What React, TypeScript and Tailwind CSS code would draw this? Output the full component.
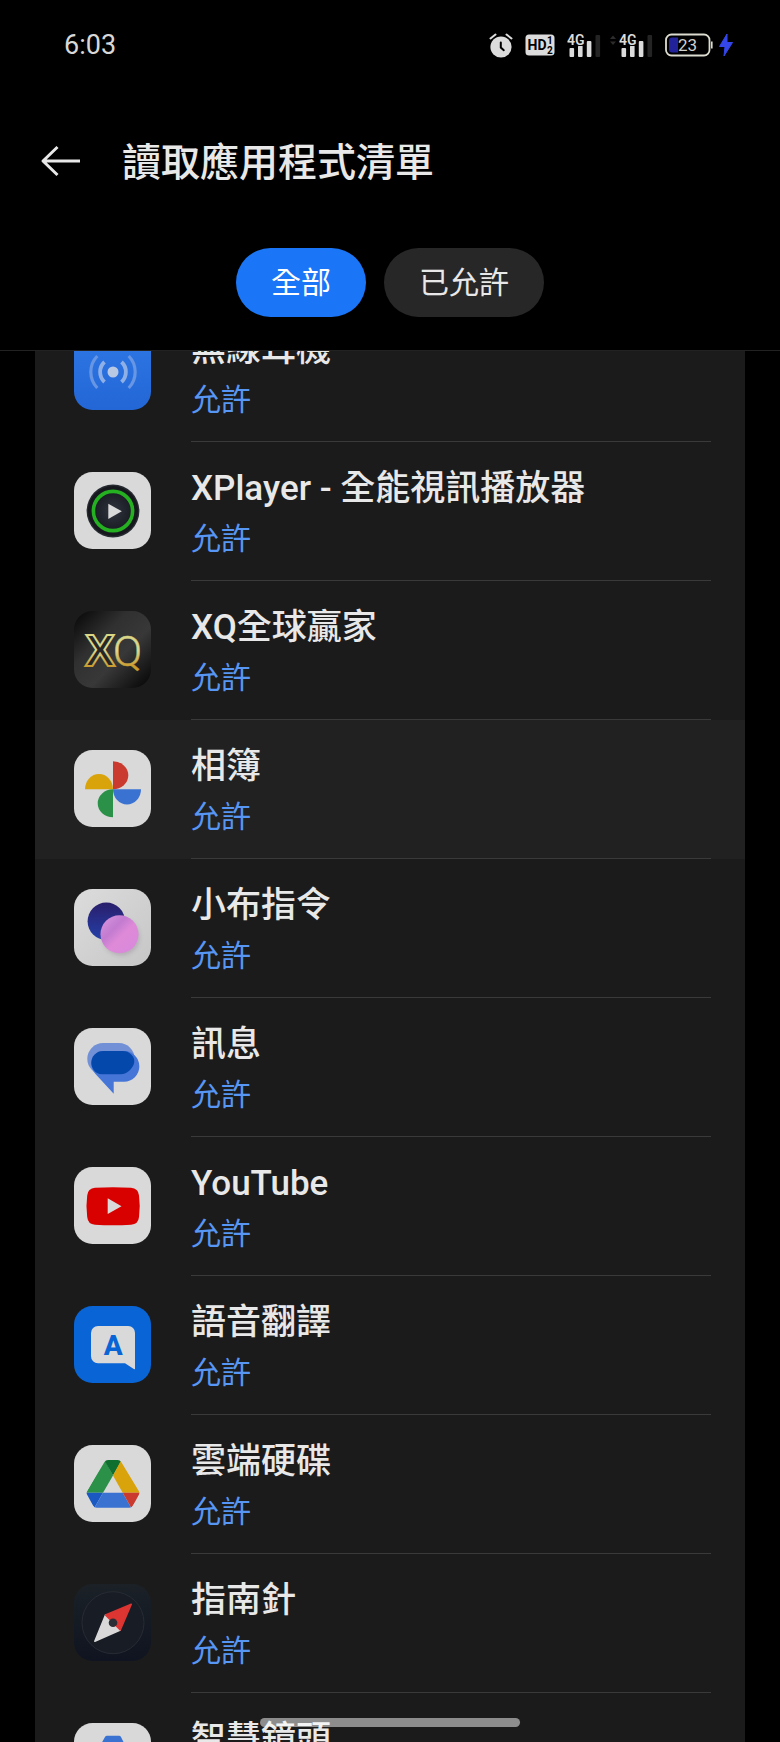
import type { ReactNode } from "react";

function Tile({ children, bg }: { children: ReactNode; bg: string }) {
  return (
    <svg viewBox="0 0 77 77" className="mb-0.5 size-[77px] shrink-0" aria-hidden="true">
      <defs>
        <linearGradient id="blueTile" x1="0" y1="0" x2="0" y2="1">
          <stop offset="0" stopColor="#2f78e6" />
          <stop offset="1" stopColor="#2366d6" />
        </linearGradient>
        <linearGradient id="metalTile" x1="0" y1="0" x2="1" y2="1">
          <stop offset="0.05" stopColor="#0c0c0c" />
          <stop offset="0.35" stopColor="#303030" />
          <stop offset="0.6" stopColor="#383838" />
          <stop offset="0.95" stopColor="#0a0a0a" />
        </linearGradient>
        <linearGradient id="nightTile" x1="0" y1="0" x2="0" y2="1">
          <stop offset="0" stopColor="#1b2127" />
          <stop offset="1" stopColor="#0f1420" />
        </linearGradient>
        <linearGradient id="silverTile" x1="0" y1="0" x2="1" y2="1">
          <stop offset="0" stopColor="#dcdcdc" />
          <stop offset="1" stopColor="#c6c6c6" />
        </linearGradient>
      </defs>
      <rect width="77" height="77" rx="18.5" fill={bg} />
      {children}
    </svg>
  );
}

const WHITE = "#d9d9d9";

const EarbudsIcon = () => (
  <Tile bg="url(#blueTile)">
    <circle cx="39" cy="39" r="5.5" fill="#b9c9e4" />
    <g fill="none">
      <path d="M30.5 29a13.6 13.6 0 0 0 0 20M47.5 29a13.6 13.6 0 0 1 0 20" stroke="#8fb0e6" strokeWidth="3.8" />
      <path d="M23.3 23a23 23 0 0 0 0 32M54.7 23a23 23 0 0 1 0 32" stroke="#6696e4" strokeWidth="3.2" />
    </g>
  </Tile>
);

const XPlayerIcon = () => (
  <Tile bg={WHITE}>
    <defs>
      <radialGradient id="disc">
        <stop offset="0" stopColor="#30343d" />
        <stop offset="0.75" stopColor="#1a1d24" />
        <stop offset="1" stopColor="#14161b" />
      </radialGradient>
    </defs>
    <circle cx="39" cy="39" r="26.4" fill="#262a31" />
    <circle cx="39" cy="39" r="25" fill="url(#disc)" />
    <circle cx="39" cy="39" r="19.6" fill="none" stroke="#25b021" strokeWidth="3.6" />
    <path d="M34.3 31.7 47.8 39.3 34.3 47z" fill={WHITE} />
  </Tile>
);

const XqIcon = () => (
  <Tile bg="url(#metalTile)">
    <defs>
      <linearGradient id="gold" gradientUnits="userSpaceOnUse" x1="0" y1="23" x2="0" y2="56">
        <stop offset="0" stopColor="#d8d684" />
        <stop offset="0.5" stopColor="#dcd690" />
        <stop offset="1" stopColor="#c99a2c" />
      </linearGradient>
    </defs>
    <text x="11" y="55" fontFamily="Liberation Sans" fontWeight="700" fontSize="45" fill="#262626" stroke="url(#gold)" strokeWidth="2">
      X<tspan dx="-2" fontFamily="Roboto" fontWeight="300" fontSize="43" fill="url(#gold)" strokeWidth="0.5">Q</tspan>
    </text>
  </Tile>
);

const PhotosIcon = () => (
  <Tile bg={WHITE}>
    <path d="M39 39.3v-28a15.3 14 0 0 1 0 28z" fill="#cb3a2e" />
    <path d="M39 39.3h-28a14 15.3 0 0 1 28 0z" fill="#d9a30c" />
    <path d="M39 39.3h28a14 15.3 0 0 1-28 0z" fill="#3a72d2" />
    <path d="M39 39.3v28a15.3 14 0 0 1 0-28z" fill="#2c9148" />
  </Tile>
);

const BreenoIcon = () => (
  <Tile bg="url(#silverTile)">
    <defs>
      <linearGradient id="indigo" x1="0" y1="0" x2="0" y2="1">
        <stop offset="0" stopColor="#2a1e6c" />
        <stop offset="1" stopColor="#2440a8" />
      </linearGradient>
      <linearGradient id="pink" x1="0" y1="0" x2="1" y2="1">
        <stop offset="0.1" stopColor="#d490dc" />
        <stop offset="0.35" stopColor="#c27bd0" />
        <stop offset="0.55" stopColor="#de8ad8" />
        <stop offset="1" stopColor="#d888dc" />
      </linearGradient>
      <filter id="soft">
        <feGaussianBlur stdDeviation="2" />
      </filter>
    </defs>
    <circle cx="32.3" cy="32.3" r="18.7" fill="url(#indigo)" />
    <circle cx="47" cy="48" r="18.5" fill="#8d7f92" opacity="0.4" filter="url(#soft)" />
    <circle cx="45.5" cy="45.3" r="19" fill="url(#pink)" />
  </Tile>
);

const MessagesIcon = () => (
  <Tile bg={WHITE}>
    <defs>
      <clipPath id="backBubble">
        <rect x="13.3" y="15" width="47.4" height="31.6" rx="15.8" />
      </clipPath>
    </defs>
    <rect x="13.3" y="15" width="47.4" height="31.6" rx="15.8" fill="#7190d6" />
    <path d="M39.7 65.7V53.7H50a15.3 15.3 0 0 0 0-30.7H29.5a12 12 0 0 0-12.2 12c0 4.5 1.2 7.5 4.2 11z" fill="#4675d8" />
    <rect x="17.3" y="23" width="43.4" height="23.6" rx="11.8" fill="#0548ab" clipPath="url(#backBubble)" />
  </Tile>
);

const YouTubeIcon = () => (
  <Tile bg={WHITE}>
    <path d="M21 20.8Q39 19.8 57 20.8Q64.3 21.3 65 28.5Q66.5 39.3 65 50Q64.3 57.3 57 57.8Q39 58.8 21 57.8Q13.9 57.3 13.2 50Q11.7 39.3 13.2 28.5Q13.9 21.3 21 20.8z" fill="#d90000" />
    <path d="M33.7 31.3 47.5 39.2 33.7 47z" fill={WHITE} />
  </Tile>
);

const TranslateIcon = () => (
  <Tile bg="#0965d6">
    <path d="M24 20H54.3a6.7 6.7 0 0 1 6.7 6.7V62.5q0 1.2-1.2.5L51 57.3H24a7 7 0 0 1-7-7V27a7 7 0 0 1 7-7z" fill={WHITE} />
    <text x="39.3" y="48.5" textAnchor="middle" fontFamily="Roboto" fontWeight="800" fontSize="28" fill="#0965d6">
      A
    </text>
  </Tile>
);

const DriveIcon = () => (
  <Tile bg={WHITE}>
    <defs>
      <clipPath id="driveShape">
        <path d="M34 15H43.7Q46 15 47.2 17L64.8 46Q66 47.7 65 49.5L59 60.5Q57.8 62.7 55.3 62.7H22.7Q20.2 62.7 19 60.5L13 49.5Q12 47.7 13 46L30.5 17Q31.7 15 34 15z" />
      </clipPath>
    </defs>
    <g clipPath="url(#driveShape)">
      <path d="M12.3 47.7 30.7 15 39 30.5 29 47.7z" fill="#2c9148" />
      <path d="M29 13H49L39 30.5z" fill="#0f6f2f" />
      <path d="M47.3 15 66.5 47.7H48.7L39 30.5z" fill="#d9a30c" />
      <path d="M10 47.7H29L20.3 63z" fill="#1b59c2" />
      <path d="M29 47.7H48.7L57.3 63H20.3z" fill="#3a72d2" />
      <path d="M48.7 47.7H68L57.3 63z" fill="#cb3a2e" />
    </g>
  </Tile>
);

const CompassIcon = () => (
  <Tile bg="url(#nightTile)">
    <circle cx="39" cy="38.7" r="31" fill="#181d25" stroke="#272c34" strokeWidth="1" />
    <g strokeLinejoin="round" strokeWidth="1.5">
      <path d="M31.5 31 20.8 57.3 46.3 46z" fill="#d9d9d9" stroke="#d9d9d9" />
      <path d="M31.5 31 57.3 20.3 46.3 46z" fill="#dc3532" stroke="#dc3532" />
    </g>
    <circle cx="39" cy="38.7" r="4.3" fill="#2b2e35" />
  </Tile>
);

const LensIcon = () => (
  <Tile bg={WHITE}>
    <path d="M45 19.3h8q12 0 12 13v8H51z" fill="#d9a30c" />
    <path d="M12 39V31q0-11.7 11-11.7h5l3-5.3q.6-1.3 2-1.3h12q1.4 0 2 1.3l4 8q-1 3-4 3H30q-6 0-6 6v8z" fill="#3a72d2" />
    <path d="M12 44v8q0 12 12 12h14V54H24V44z" fill="#cb3a2e" />
    <circle cx="39" cy="40" r="10" fill="#3a72d2" />
    <circle cx="59" cy="58" r="5" fill="#2c9148" />
  </Tile>
);

type AppEntry = { name: string; icon: () => ReactNode; pressed?: boolean };

const apps: AppEntry[] = [
  { name: "無線耳機", icon: EarbudsIcon },
  { name: "XPlayer - 全能視訊播放器", icon: XPlayerIcon },
  { name: "XQ全球贏家", icon: XqIcon },
  { name: "相簿", icon: PhotosIcon, pressed: true },
  { name: "小布指令", icon: BreenoIcon },
  { name: "訊息", icon: MessagesIcon },
  { name: "YouTube", icon: YouTubeIcon },
  { name: "語音翻譯", icon: TranslateIcon },
  { name: "雲端硬碟", icon: DriveIcon },
  { name: "指南針", icon: CompassIcon },
  { name: "智慧鏡頭", icon: LensIcon },
];

function Signal({ arrows }: { arrows?: boolean }) {
  return (
    <svg viewBox={arrows ? "-10 0 44 25" : "0 0 34 25"} className={arrows ? "h-[25px] w-11" : "h-[25px] w-[34px]"} aria-hidden="true">
      {arrows && <path d="M-9 6 -6 2.5 -3 6zM-9 8.5 -6 12 -3 8.5z" fill="#2c2c2c" />}
      <rect x="28.5" y="2" width="4.6" height="22" rx="1" fill="#242424" />
      <g fill="#dcdcdc">
        <rect x="2.5" y="15" width="4.6" height="9" rx="1" />
        <rect x="11" y="12.5" width="4.6" height="11.5" rx="1" />
        <rect x="19.8" y="8" width="4.6" height="16" rx="1" />
      </g>
      <text x="0" y="12" fontFamily="Roboto" fontWeight="600" fontSize="14" fill="#dcdcdc" stroke="#000" strokeWidth="2" paintOrder="stroke">
        4G
      </text>
    </svg>
  );
}

function StatusBar() {
  return (
    <div className="flex h-[90px] items-center justify-between pr-[47px] pl-16">
      <time className="text-[27px] leading-8 text-[#d8d8d8]">6:03</time>
      <div className="flex items-center">
        <svg viewBox="0 0 24 25" className="mr-3 h-[25px] w-6" aria-hidden="true">
          <circle cx="12" cy="14" r="10.6" fill="#dcdcdc" />
          <path d="M1.5 5.5 6.5 1.5M22.5 5.5 17.5 1.5" stroke="#dcdcdc" strokeWidth="2" strokeLinecap="round" />
          <path d="M11.8 9.5V14.5L14.8 17.2" stroke="#000" strokeWidth="2" fill="none" strokeLinecap="round" />
        </svg>
        <svg viewBox="0 0 30 22" className="mr-3 h-[22px] w-[30px]" aria-hidden="true">
          <rect x="0.5" y="0.5" width="29" height="21" rx="3.5" fill="#dcdcdc" />
          <g fontFamily="Roboto" fontWeight="700" fill="#000">
            <text x="2.5" y="16" fontSize="14">HD</text>
            <text x="22" y="10" fontSize="10">1</text>
            <text x="22" y="19.5" fontSize="10">2</text>
          </g>
        </svg>
        <span className="mr-2"><Signal /></span>
        <span className="mr-3"><Signal arrows /></span>
        <svg viewBox="0 0 48 24" className="mr-1.5 h-6 w-12" aria-hidden="true">
          <rect x="1" y="1.5" width="43.5" height="21" rx="5.5" fill="none" stroke="#dcdcd0" strokeWidth="1.8" />
          <path d="M7 4.5H13V19.5H7a3 3 0 0 1-3-3V7.5a3 3 0 0 1 3-3z" fill="#22229a" />
          <path d="M46.8 8.5v7" stroke="#dcdcd0" strokeWidth="1.6" />
          <text x="22.5" y="18" textAnchor="middle" fontFamily="Roboto" fontSize="17" fill="#d0d0d0">23</text>
        </svg>
        <svg viewBox="0 0 14 24" className="h-6 w-3.5" aria-hidden="true">
          <path d="M8 1 0.5 13.5H6L5 23 13.5 9.5H8z" fill="#3446e8" stroke="#3446e8" strokeWidth="1" strokeLinejoin="round" />
        </svg>
      </div>
    </div>
  );
}

export default function App() {
  return (
    <div className="flex h-screen flex-col overflow-hidden bg-black font-['Roboto','Noto_Sans_CJK_TC',sans-serif] text-[#e8e8e8]">
      <StatusBar />
      <header className="flex h-[142px] items-center gap-[42px] pl-10">
        <button type="button" aria-label="返回">
          <svg viewBox="0 0 40 34" className="h-[34px] w-10" fill="none" stroke="#e8e8e8" strokeWidth="3" aria-hidden="true">
            <path d="M2.5 17H40M17.5 3 3 17 17.5 31" strokeLinejoin="round" />
          </svg>
        </button>
        <h1 className="pt-1 text-[39px] leading-14 font-medium">讀取應用程式清單</h1>
      </header>
      <div className="flex h-[119px] shrink-0 items-start justify-center gap-[18px] border-b border-[#222222] pt-4">
        <button type="button" aria-pressed="true" className="h-[69px] rounded-full bg-[#1a76f6] px-[35px] text-[30px] leading-[70px] text-white">
          全部
        </button>
        <button type="button" aria-pressed="false" className="h-[69px] rounded-full bg-[#272727] px-[35px] text-[30px] leading-[70px]">
          已允許
        </button>
      </div>
      <main className="min-h-0 flex-1 overflow-hidden px-[35px]">
        <ul className="-mt-12 bg-[#1b1b1b]">
          {apps.map(({ name, icon: Icon, pressed }) => (
            <li key={name} className={pressed ? "bg-[#212121]" : ""}>
              <a href="#" className="flex h-[139px] items-center gap-10 pr-[34px] pl-[39px]">
                <Icon />
                <span className="flex h-full flex-1 flex-col justify-center border-b border-[#3a3a3a] pt-[3px] whitespace-nowrap">
                  <span className="text-[35px] leading-[52px] font-medium">{name}</span>
                  <span className="text-[30px] leading-12 text-[#5796f2]">允許</span>
                </span>
              </a>
            </li>
          ))}
        </ul>
      </main>
      <div className="fixed bottom-[15px] left-1/2 h-[9px] w-1/3 -translate-x-1/2 rounded-full bg-white/50" />
    </div>
  );
}
